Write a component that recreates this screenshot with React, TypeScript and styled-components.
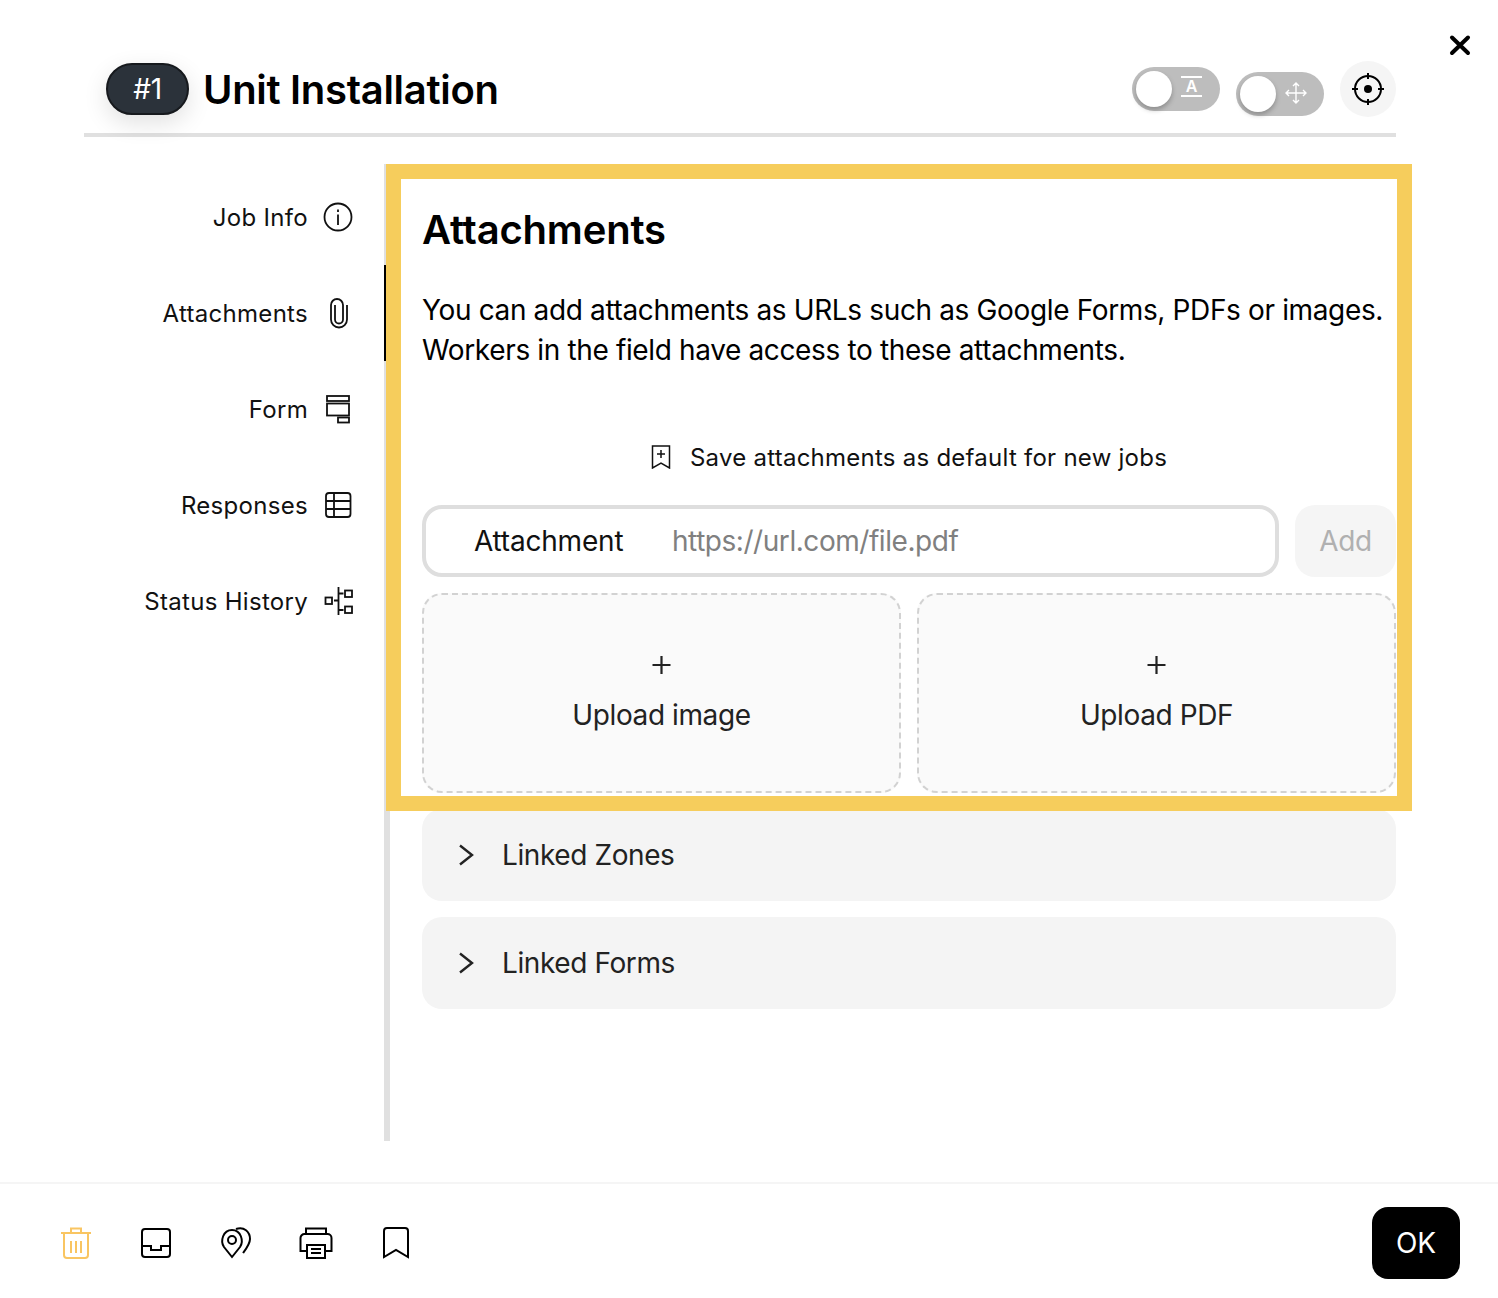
import styled, { createGlobalStyle } from 'styled-components';

const GlobalStyle = createGlobalStyle`
  html, body {
    margin: 0;
    padding: 0;
    background: #fff;
    font-family: Inter, 'Liberation Sans', sans-serif;
    color: #000;
  }
`;

const Page = styled.div`
  position: relative;
  width: 1498px;
  height: 1298px;
  overflow: hidden;
  display: flex;
  flex-direction: column;
`;

const CloseButton = styled.button`
  position: absolute;
  top: 31px;
  right: 24px;
  width: 28px;
  height: 28px;
  padding: 0;
  border: 0;
  background: none;
  color: #000;
`;

const Header = styled.header`
  display: flex;
  align-items: center;
  margin: 61px 102px 0 84px;
  padding: 0 0 16px 22px;
  border-bottom: 4px solid #e0e0e0;
`;

const Badge = styled.div`
  box-sizing: border-box;
  width: 83px;
  height: 52px;
  display: flex;
  align-items: center;
  justify-content: center;
  border: 2px solid #16191d;
  border-radius: 26px;
  background: #2b323a;
  color: #fff;
  font-size: 28px;
  letter-spacing: -0.3px;
  box-shadow: 0 8px 24px rgba(0, 0, 0, 0.12);
`;

const Title = styled.h1`
  flex: 1;
  margin: 2px 0 0 14px;
  font-size: 40px;
  font-weight: 600;
  line-height: 52px;
  letter-spacing: -0.3px;
`;

const Toggle = styled.div<{ $shift?: number }>`
  box-sizing: border-box;
  width: 88px;
  height: 44px;
  margin-top: ${({ $shift }) => $shift ?? 0}px;
  margin-right: 16px;
  padding: 4px;
  display: flex;
  align-items: center;
  gap: 9px;
  border-radius: 22px;
  background: #bdbdbd;
  color: #fff;
`;

const Knob = styled.span`
  flex: none;
  width: 36px;
  height: 36px;
  border-radius: 50%;
  background: #fff;
  box-shadow: 0 3px 5px rgba(0, 0, 0, 0.25);
`;

const RoundButton = styled.div`
  width: 56px;
  height: 56px;
  display: flex;
  align-items: center;
  justify-content: center;
  border-radius: 50%;
  background: #f5f5f5;
`;

const Body = styled.div`
  flex: 1;
  display: flex;
  margin: 27px 102px 41px 84px;
`;

const Sidebar = styled.nav`
  box-sizing: border-box;
  width: 300px;
  padding-top: 5px;
`;

const NavItem = styled.div<{ $active?: boolean }>`
  position: relative;
  z-index: 1;
  box-sizing: border-box;
  height: 96px;
  display: flex;
  align-items: center;
  justify-content: flex-end;
  gap: 14px;
  padding-right: 30px;
  font-size: 24px;
  letter-spacing: 0.3px;
  color: #111;
  box-shadow: ${({ $active }) => ($active ? '2px 0 0 #000' : 'none')};
`;

const Main = styled.main`
  flex: 1;
  min-width: 0;
  padding-left: 32px;
  border-left: 6px solid #e0e0e0;
`;

const Highlight = styled.section`
  position: relative;
  z-index: 2;
  box-sizing: border-box;
  height: 647px;
  margin: 0 -16px -2px -36px;
  padding: 0 1px 0 21px;
  border: 15px solid #f6cd5c;
  background: #fff;
`;

const Heading = styled.h2`
  margin: 26px 0 0;
  font-size: 40px;
  font-weight: 600;
  line-height: 50px;
  letter-spacing: -0.2px;
`;

const Description = styled.p`
  margin: 35px 0 0;
  font-size: 28px;
  line-height: 40px;
  letter-spacing: -0.36px;
  white-space: nowrap;
`;

const SaveRow = styled.div`
  height: 32px;
  margin-top: 71px;
  display: flex;
  align-items: center;
  justify-content: center;
  gap: 19px;
  font-size: 24px;
  letter-spacing: 0.25px;
  color: #111;
`;

const InputRow = styled.div`
  margin-top: 32px;
  display: flex;
  gap: 16px;
`;

const InputBox = styled.div`
  box-sizing: border-box;
  flex: 1;
  height: 72px;
  display: flex;
  align-items: center;
  padding-left: 48px;
  border: 4px solid #dedede;
  border-radius: 20px;
  font-size: 28px;
`;

const InputLabel = styled.span`
  width: 198px;
  letter-spacing: -0.2px;
  color: #111;
`;

const Placeholder = styled.span`
  letter-spacing: -0.45px;
  color: #808080;
`;

const AddButton = styled.div`
  width: 101px;
  height: 72px;
  display: flex;
  align-items: center;
  justify-content: center;
  border-radius: 20px;
  background: #f5f5f5;
  color: #b0b0b0;
  font-size: 28px;
  letter-spacing: -0.3px;
`;

const UploadRow = styled.div`
  margin-top: 16px;
  display: grid;
  grid-template-columns: 1fr 1fr;
  gap: 16px;
`;

const UploadTile = styled.div`
  box-sizing: border-box;
  height: 200px;
  padding-top: 60px;
  display: flex;
  flex-direction: column;
  align-items: center;
  gap: 22px;
  border: 2px dashed #d2d2d2;
  border-radius: 20px;
  background: #fafafa;
  color: #222;
  font-size: 28px;
  line-height: 36px;
  letter-spacing: -0.4px;
`;

const Accordion = styled.div`
  height: 92px;
  margin-bottom: 16px;
  padding-left: 36px;
  display: flex;
  align-items: center;
  gap: 28px;
  border-radius: 20px;
  background: #f4f4f4;
  color: #222;
  font-size: 28px;
  letter-spacing: -0.4px;
`;

const Footer = styled.footer`
  box-sizing: border-box;
  height: 116px;
  padding: 23px 38px 0 56px;
  display: flex;
  align-items: flex-start;
  border-top: 2px solid #f5f5f5;
`;

const FooterIcons = styled.div`
  flex: 1;
  height: 72px;
  display: flex;
  align-items: center;
  gap: 40px;
`;

const OkButton = styled.button`
  width: 88px;
  height: 72px;
  padding: 0;
  border: 0;
  border-radius: 16px;
  background: #000;
  color: #fff;
  font-family: inherit;
  font-size: 28px;
`;

const Icon = styled.svg<{ $color?: string; $stroke?: number; $lift?: number }>`
  display: block;
  flex: none;
  fill: none;
  margin-bottom: ${({ $lift }) => $lift ?? 0}px;
  stroke: ${({ $color }) => $color ?? 'currentColor'};
  stroke-width: ${({ $stroke }) => $stroke ?? 2};
`;

const navItems = [
  {
    label: 'Job Info',
    icon: (
      <>
        <circle cx="16" cy="16" r="13.5" />
        <path d="M16 13.5V24M16 8.5V11" />
      </>
    ),
  },
  {
    label: 'Attachments',
    active: true,
    icon: <path d="M25 8v14.5a8 8 0 0 1-16 0V8a6 6 0 0 1 12 0v14.5a4 4 0 0 1-8 0V8" />,
  },
  {
    label: 'Form',
    icon: (
      <>
        <rect x="5" y="3" width="22" height="5" />
        <rect x="5" y="10.5" width="22" height="12" />
        <rect x="16" y="24.5" width="11" height="5" />
      </>
    ),
  },
  {
    label: 'Responses',
    icon: (
      <>
        <rect x="4" y="4" width="24.5" height="24" rx="3" />
        <path d="M12 4v24M4 12h24.5M4 20h24.5" />
      </>
    ),
  },
  {
    label: 'Status History',
    icon: (
      <>
        <rect x="3.5" y="12.5" width="6.5" height="6.5" />
        <rect x="23" y="5.5" width="7" height="6.5" />
        <rect x="23" y="21.5" width="7" height="6.5" />
        <path d="M16.5 2v28M12 15.500h4.500M16.500 8.500h5M16.500 25h5" />
      </>
    ),
  },
];

const Chevron = () => (
  <Icon width="16" height="24" viewBox="0 0 16 24" $stroke={2.4}>
    <path d="M2 2.5 14 12 2 21.5" />
  </Icon>
);

const Plus = () => (
  <Icon width="20" height="20" viewBox="0 0 20 20" $stroke={2.2}>
    <path d="M9.5 1v18M.5 10h18" />
  </Icon>
);

export default function App() {
  return (
    <Page>
      <GlobalStyle />
      <CloseButton aria-label="Close">
        <Icon width="28" height="28" viewBox="0 0 28 28" $stroke={4} strokeLinecap="round">
          <path d="M6 6.5 22 22M22 6.5 6 22" />
        </Icon>
      </CloseButton>

      <Header>
        <Badge>#1</Badge>
        <Title>Unit Installation</Title>
        <Toggle>
          <Knob />
          <Icon width="22" height="22" viewBox="0 0 22 22" $lift={4}>
            <path d="M0 1h21M0 20h21" />
            <text x="10.5" y="16" textAnchor="middle" fontSize="16" fontWeight="600" fill="#fff" stroke="none" fontFamily="Inter">
              A
            </text>
          </Icon>
        </Toggle>
        <Toggle $shift={10}>
          <Knob />
          <Icon width="22" height="22" viewBox="0 0 22 22" $stroke={1.4} $lift={2}>
            <path d="M11 1v20M1 11h20M8 4l3-3 3 3M8 18l3 3 3-3M4 8l-3 3 3 3M18 8l3 3-3 3" />
          </Icon>
        </Toggle>
        <RoundButton>
          <Icon width="32" height="32" viewBox="0 0 32 32">
            <circle cx="16" cy="16" r="13" />
            <circle cx="16" cy="16" r="4" fill="#000" stroke="none" />
            <path d="M16 0v6M16 26v6M0 16h6M26 16h6" />
          </Icon>
        </RoundButton>
      </Header>

      <Body>
        <Sidebar>
          {navItems.map((item) => (
            <NavItem key={item.label} $active={item.active}>
              {item.label}
              <Icon width="32" height="32" viewBox="0 0 32 32" $stroke={1.8}>
                {item.icon}
              </Icon>
            </NavItem>
          ))}
        </Sidebar>

        <Main>
          <Highlight>
            <Heading>Attachments</Heading>
            <Description>
              You can add attachments as URLs such as Google Forms, PDFs or images.
              <br />
              Workers in the field have access to these attachments.
            </Description>
            <SaveRow>
              <Icon width="20" height="24" viewBox="0 0 20 24" $stroke={1.5}>
                <path d="M1.500 1h17v22L10 18l-8.500 5zM10 5v8M6 9h8" />
              </Icon>
              Save attachments as default for new jobs
            </SaveRow>
            <InputRow>
              <InputBox>
                <InputLabel>Attachment</InputLabel>
                <Placeholder>https://url.com/file.pdf</Placeholder>
              </InputBox>
              <AddButton>Add</AddButton>
            </InputRow>
            <UploadRow>
              <UploadTile>
                <Plus />
                Upload image
              </UploadTile>
              <UploadTile>
                <Plus />
                Upload PDF
              </UploadTile>
            </UploadRow>
          </Highlight>

          <Accordion>
            <Chevron />
            Linked Zones
          </Accordion>
          <Accordion>
            <Chevron />
            Linked Forms
          </Accordion>
        </Main>
      </Body>

      <Footer>
        <FooterIcons>
          <Icon width="40" height="40" viewBox="0 0 40 40" $color="#f9c562">
            <path d="M5 10h30M15 10V5.500h10V10M8 10v22a3 3 0 0 0 3 3h18a3 3 0 0 0 3-3V10M15 18v12M20 18v12M25 18v12" />
          </Icon>
          <Icon width="40" height="40" viewBox="0 0 40 40">
            <rect x="6" y="6" width="28" height="28" rx="3" />
            <path d="M6 23h9v4h10v-4h9" />
          </Icon>
          <Icon width="40" height="40" viewBox="0 0 40 40">
            <path d="M16 34 8 24c-4-6-1-17 8-17s12 11 8 17z" />
            <circle cx="16" cy="17" r="4" />
            <path d="M20 6c8-3 14 3 14 10 0 5-4 10-7 14" />
          </Icon>
          <Icon width="40" height="40" viewBox="0 0 40 40">
            <path d="M10 11V5.500h20V11M11 28H4.500V15a4 4 0 0 1 4-4h23a4 4 0 0 1 4 4v13H29" />
            <rect x="11" y="22" width="18" height="13" />
            <path d="M15 26h10M15 30h10" />
          </Icon>
          <Icon width="40" height="40" viewBox="0 0 40 40">
            <path d="M8 34V8a3 3 0 0 1 3-3h18a3 3 0 0 1 3 3v26l-12-7z" />
          </Icon>
        </FooterIcons>
        <OkButton>OK</OkButton>
      </Footer>
    </Page>
  );
}
